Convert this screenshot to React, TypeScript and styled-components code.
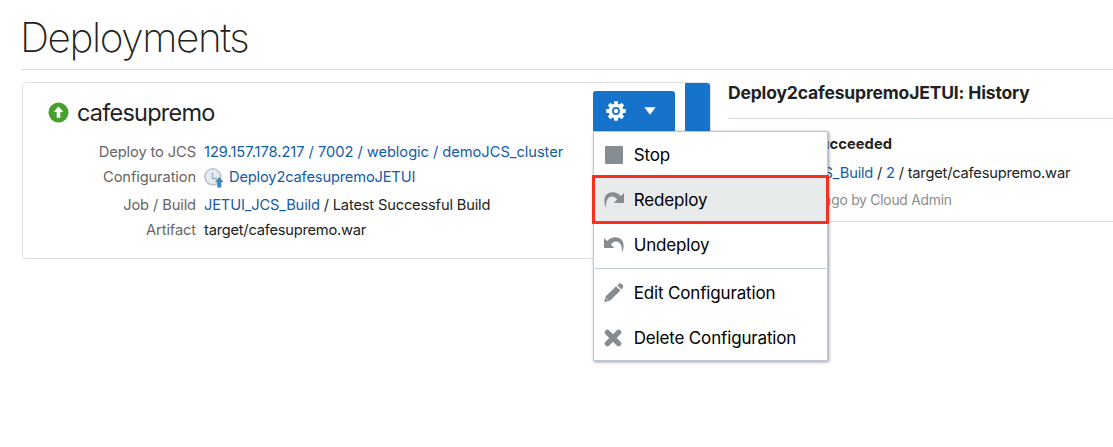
import React from 'react';
import styled, { createGlobalStyle } from 'styled-components';

const Global = createGlobalStyle`
  *, *::before, *::after { box-sizing: border-box; }
  body { margin: 0; background: #fff; color: #222; font-family: Inter, "Liberation Sans", sans-serif; overflow: hidden; }
`;

const Page = styled.main`
  width: 100%;
  height: 447px;
  padding-left: 22px;
  overflow: hidden;
`;

const PageHeader = styled.header`
  height: 70px;
  padding-top: 13px;
  border-bottom: 1px solid #d3dde6;
`;

const PageTitle = styled.h1`
  margin: 0 0 0 -2px;
  font-size: 40.5px;
  line-height: 50px;
  font-weight: 200;
  letter-spacing: -1.4px;
`;

const Columns = styled.div`
  display: flex;
  gap: 17px;
  padding-top: 12px;
`;

const Card = styled.section`
  position: relative;
  display: flex;
  justify-content: space-between;
  width: 689px;
  height: 177px;
  flex: none;
  border: 1px solid #dfe3e5;
  border-radius: 4px;
`;

const CardBody = styled.div`
  padding: 15px 0 0 25px;
`;

const SelectedBar = styled.div`
  width: 25px;
  background: #1673cc;
  border-radius: 0 3px 3px 0;
`;

const CardTitle = styled.div`
  display: flex;
  align-items: center;
  gap: 8px;
  height: 28px;
  font-size: 23.5px;
  letter-spacing: -0.78px;
  svg { flex: none; }
`;

const Details = styled.dl`
  margin: 14px 0 0;
`;

const Detail = styled.div<{ $gap?: number }>`
  display: flex;
  gap: 8px;
  height: 25px;
  margin-top: ${(p) => p.$gap ?? 0}px;
  font-size: 14.7px;
  line-height: 25px;
  white-space: nowrap;
`;

const Label = styled.dt`
  width: 148px;
  text-align: right;
  color: #666;
  letter-spacing: -0.12px;
`;

const Value = styled.dd<{ $spacing: number }>`
  display: flex;
  align-items: center;
  margin: 0;
  white-space: pre;
  letter-spacing: ${(p) => p.$spacing}px;
  svg { margin-right: 5px; }
`;

const Link = styled.a`
  color: #135ca8;
`;

const Actions = styled.div`
  position: absolute;
  left: 570px;
  top: 8px;
  z-index: 2;
`;

const GearButton = styled.button`
  display: flex;
  align-items: center;
  gap: 18px;
  width: 82px;
  height: 40px;
  padding: 0 0 0 13px;
  border: 0;
  border-radius: 3px 3px 0 0;
  background: #1673cc;
`;

const Menu = styled.ul`
  width: 235px;
  height: 230px;
  margin: 0;
  padding: 0;
  list-style: none;
  background: #fff;
  border: 1px solid #bfc8d0;
  box-shadow: 1px 1px 3px rgba(60, 70, 80, 0.55);
`;

const MenuItem = styled.li<{ $active?: boolean }>`
  position: relative;
  display: flex;
  align-items: center;
  gap: 9px;
  height: 45px;
  padding-left: 8.7px;
  color: #000;
  font-size: 17px;
  letter-spacing: -0.16px;
  background: ${(p) => (p.$active ? '#e9eaec' : 'transparent')};
`;

const Highlight = styled.span`
  position: absolute;
  inset: -2px;
  border: 3px solid #f8301f;
`;

const Separator = styled.li`
  height: 1px;
  margin: 1px;
  background: #bfc9d1;
`;

const History = styled.section`
  flex: 1;
  min-width: 0;
`;

const HistoryTitle = styled.h2`
  margin: 0;
  height: 37px;
  border-bottom: 1px solid #d3dde6;
  font-size: 17.5px;
  line-height: 21px;
  font-weight: 700;
  letter-spacing: -0.16px;
`;

const HistoryEntry = styled.div`
  height: 103px;
  padding: 11px 0 0 30px;
  border-bottom: 1px solid #d3dde6;
  font-size: 14.7px;
  line-height: 28px;
  white-space: nowrap;
`;

const Status = styled.div`
  font-weight: 700;
  letter-spacing: 0.06px;
`;

const Source = styled.div`
  margin-top: 1px;
  letter-spacing: -0.22px;
`;

const Time = styled.div`
  margin-top: -1px;
  color: #8a8a8a;
  font-size: 13.8px;
  letter-spacing: -0.21px;
`;

const UpIcon = () => (
  <svg width="21" height="21" viewBox="0 0 21 21">
    <circle cx="10.5" cy="10.5" r="10" fill="#46a12b" />
    <path d="M10.5 4.5 15.5 10H12.3v5.8H8.7V10H5.5z" fill="#fff" />
  </svg>
);

const ScheduleIcon = () => (
  <svg width="20" height="20" viewBox="0 0 20 20">
    <circle cx="8.8" cy="8.8" r="8" fill="#e4ebf2" stroke="#b9c1ca" strokeWidth="1.4" />
    <path d="M8.5 4.5v6h4.5" fill="none" stroke="#a3aebb" strokeWidth="1.3" />
    <path d="m15.3 9 4.3 5h-2.3v5.5h-4V14H11z" fill="#3d87b8" />
  </svg>
);

const GearIcon = () => (
  <svg width="20" height="20" viewBox="-10 -10 20 20">
    <g fill="#fff">
      {[0, 45, 90, 135].map((a) => (
        <rect key={a} x="-2" y="-9.8" width="4" height="19.6" rx=".8" transform={`rotate(${a})`} />
      ))}
      <circle r="7.4" />
    </g>
    <circle r="3.1" fill="none" stroke="#1673cc" strokeWidth="1.7" />
  </svg>
);

const CaretIcon = () => (
  <svg width="12" height="8" viewBox="0 0 12 8">
    <path d="M.3.3h11.4L6 7.7z" fill="#fff" />
  </svg>
);

const StopIcon = () => (
  <svg width="22" height="20" viewBox="0 0 22 20">
    <rect x="2" y="1" width="18" height="18" rx="1" fill="#878c90" />
  </svg>
);

const TurnIcon = ({ back = false }: { back?: boolean }) => (
  <svg width="22" height="20" viewBox="0 0 22 20">
    <path
      transform={back ? 'matrix(-1 0 0 1 22 0)' : undefined}
      d="M3.2 18C-.6 10.5 1.5 2.5 9.5 2.3 12.8 2.3 15.4 3.6 17.6 6L21 3.2V13H10.7L14.2 9.5C12.6 7.4 10.8 6.4 8.7 6.5 4.2 6.8 2.6 12 3.2 18z"
      fill="#878c90"
    />
  </svg>
);

const PencilIcon = () => (
  <svg width="22" height="20" viewBox="0 0 22 20">
    <path d="M1.2 19.3 2.6 13.6 13 3.2 17.4 7.6 7 17.8zM14.2 2.2 15.6 1C17 .2 18.3.5 19.3 1.5S20.6 3.8 19.6 4.8L18.4 6.4z" fill="#878c90" />
    <path d="m2.5 14.8 3.5 3.4" stroke="#fff" strokeWidth=".6" />
  </svg>
);

const DeleteIcon = () => (
  <svg width="22" height="20" viewBox="0 0 22 20">
    <path d="m4.4 4.4 11.2 11.2M15.6 4.4 4.4 15.6" stroke="#878c90" strokeWidth="5.4" strokeLinecap="round" />
  </svg>
);

export default function App() {
  return (
    <Page>
      <Global />
      <PageHeader>
        <PageTitle>Deployments</PageTitle>
      </PageHeader>
      <Columns>
        <Card>
          <CardBody>
            <CardTitle>
              <UpIcon />
              cafesupremo
            </CardTitle>
            <Details>
              <Detail>
                <Label>Deploy to JCS</Label>
                <Value $spacing={-0.05}>
                  <Link>129.157.178.217 / 7002 / weblogic / demoJCS_cluster</Link>
                </Value>
              </Detail>
              <Detail>
                <Label>Configuration</Label>
                <Value $spacing={-0.18}>
                  <ScheduleIcon />
                  <Link>Deploy2cafesupremoJETUI</Link>
                </Value>
              </Detail>
              <Detail $gap={3}>
                <Label>Job / Build</Label>
                <Value $spacing={-0.18}>
                  <Link>JETUI_JCS_Build</Link> / Latest Successful Build
                </Value>
              </Detail>
              <Detail>
                <Label>Artifact</Label>
                <Value $spacing={-0.24}>target/cafesupremo.war</Value>
              </Detail>
            </Details>
          </CardBody>
          <SelectedBar />
          <Actions>
            <GearButton aria-label="Actions">
              <GearIcon />
              <CaretIcon />
            </GearButton>
            <Menu>
              <MenuItem>
                <StopIcon />
                Stop
              </MenuItem>
              <MenuItem $active>
                <TurnIcon />
                Redeploy
                <Highlight />
              </MenuItem>
              <MenuItem>
                <TurnIcon back />
                Undeploy
              </MenuItem>
              <Separator />
              <MenuItem>
                <PencilIcon />
                Edit Configuration
              </MenuItem>
              <MenuItem>
                <DeleteIcon />
                Delete Configuration
              </MenuItem>
            </Menu>
          </Actions>
        </Card>
        <History>
          <HistoryTitle>Deploy2cafesupremoJETUI: History</HistoryTitle>
          <HistoryEntry>
            <Status>Deploy succeeded</Status>
            <Source>
              <Link>JETUI_JCS_Build</Link> / <Link>2</Link> / target/cafesupremo.war
            </Source>
            <Time>3 minutes ago by Cloud Admin</Time>
          </HistoryEntry>
        </History>
      </Columns>
    </Page>
  );
}
